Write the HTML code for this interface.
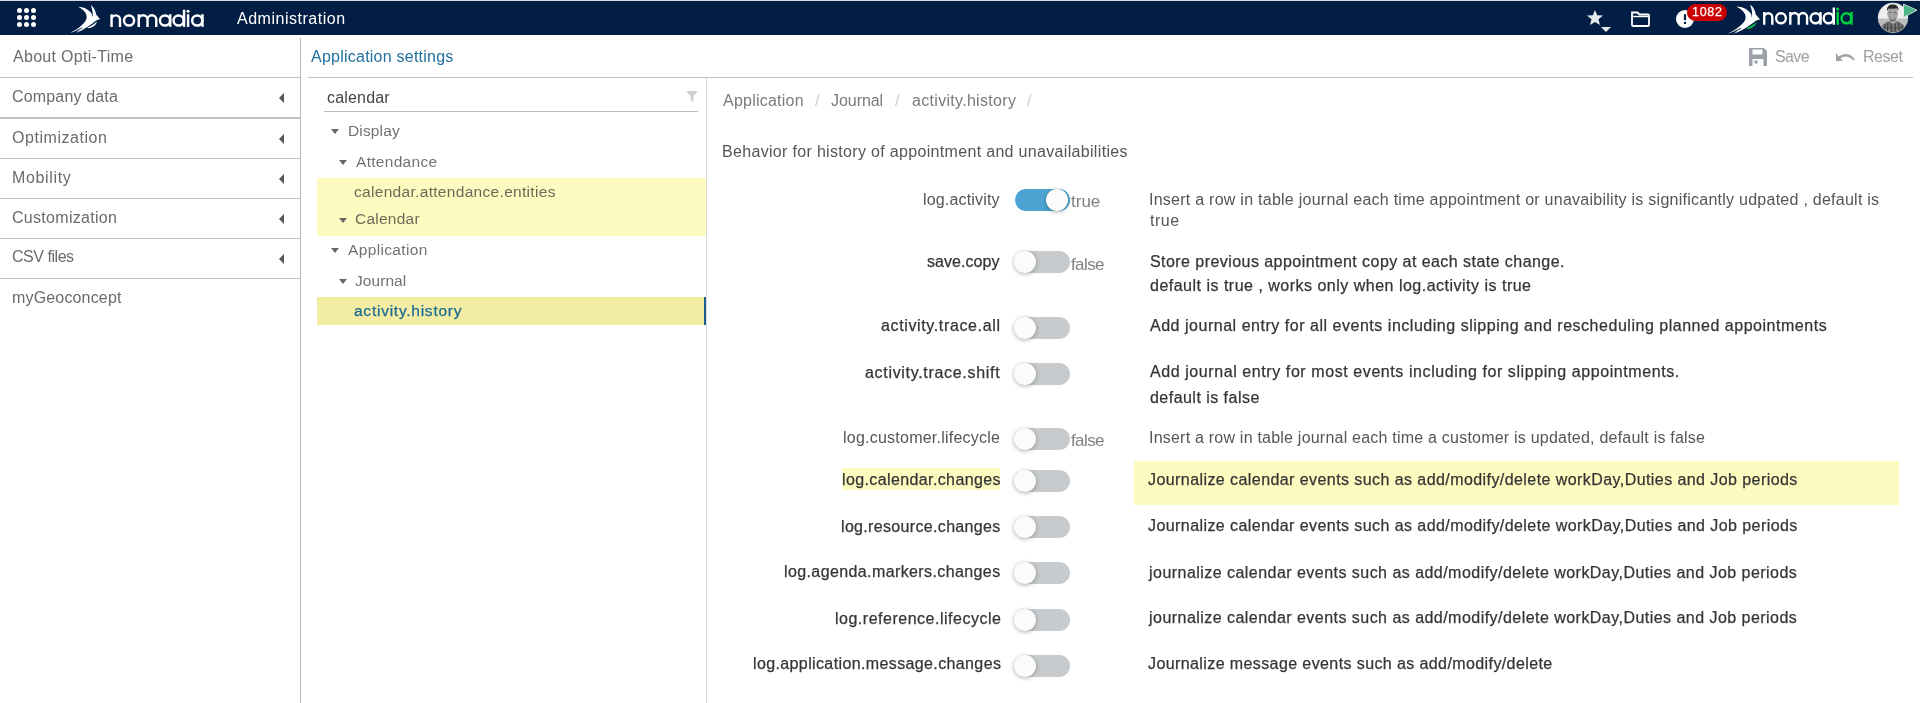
<!DOCTYPE html>
<html><head><meta charset="utf-8">
<style>
*{box-sizing:border-box;margin:0;padding:0}
html,body{width:1920px;height:703px;overflow:hidden;background:#fff;font-family:"Liberation Sans",sans-serif}
.a{position:absolute}
.t{position:absolute;white-space:nowrap;line-height:20px;will-change:transform}
.hdr{position:absolute;left:0;top:0;width:1920px;height:35px;background:#021e44;border-top:1px solid #d8dbe0}
.dot{position:absolute;width:5px;height:5px;border-radius:50%;background:#fff}
.hl{position:absolute;height:1px;background:#bcc2c6}
.vl{position:absolute;width:1px}
.arr{position:absolute;left:279px;width:0;height:0;border-top:5px solid transparent;border-bottom:5px solid transparent;border-right:5.5px solid #555}
.tri{position:absolute;width:0;height:0;border-left:4.5px solid transparent;border-right:4.5px solid transparent;border-top:5px solid #666}
.tg{position:absolute;left:1015px;width:55px;height:22px;border-radius:11px;background:#c8cbcd}
.tg.on{background:#4da4d2}
.kn{position:absolute;top:0;width:22px;height:22px;border-radius:50%;background:#fbfbfb;box-shadow:0 1px 4px rgba(0,0,0,.33)}
</style></head><body>

<div class="hdr"></div>
<div class="dot" style="left:17px;top:8px"></div><div class="dot" style="left:24px;top:8px"></div><div class="dot" style="left:31px;top:8px"></div>
<div class="dot" style="left:17px;top:15px"></div><div class="dot" style="left:24px;top:15px"></div><div class="dot" style="left:31px;top:15px"></div>
<div class="dot" style="left:17px;top:22px"></div><div class="dot" style="left:24px;top:22px"></div><div class="dot" style="left:31px;top:22px"></div>

<svg class="a" style="left:64px;top:0px" width="40" height="36" viewBox="0 0 40 36">
 <g transform="translate(3.5 0.6) scale(0.93 0.96)">
 <path d="M11.3 6.4 C17 6.5 22.5 9 25.5 13 C28 17 26.5 22 22 25.5 C16 30 8 32.5 3.1 33.5 C9 30.5 14.5 27 18 23 C21.5 19.5 23.5 12.5 11.3 6.4 Z" fill="#fff"/>
 <path d="M25.1 4.6 C28 6.5 30 10 30.8 14.5 L35.1 19.5 C33.5 19.8 31.8 20.3 30.5 21 C26 24.5 18 30.5 9.2 33.5 C14 29.5 19 26 22.5 22.5 C25.5 19.5 27.5 17 27.2 13.5 C27 10.5 26 7.5 25.1 4.6 Z" fill="#fff"/>
 <path d="M6 33.2 L16 28.3" stroke="#021e44" stroke-width="0.9"/>
 <path d="M21.8 27.9 C25.5 26.6 29 24.6 31.6 21.9 C31 25.4 27.5 28.3 21.8 28.9 Z" fill="#fff"/>
 </g>
</svg>

<svg class="a" style="left:1586px;top:9px" width="27" height="25" viewBox="0 0 27 25">
 <path d="M9 1 L11.2 6.3 L17 6.6 L12.5 10.3 L14 16 L9 12.9 L4 16 L5.5 10.3 L1 6.6 L6.8 6.3 Z" fill="#e6e8ec"/>
 <path d="M15 18 L25 18 L20 23 Z" fill="#e6e8ec"/>
</svg>
<svg class="a" style="left:1630px;top:10px" width="21" height="18" viewBox="0 0 21 18">
 <path d="M2 2.5 L7.5 2.5 L9.5 4.5 L18 4.5 Q19 4.5 19 5.5 L19 15 Q19 16 18 16 L3 16 Q2 16 2 15 Z" fill="none" stroke="#fff" stroke-width="1.8"/>
 <path d="M2 6.5 L19 6.5" stroke="#fff" stroke-width="1.4"/>
</svg>
<svg class="a" style="left:1675px;top:9px" width="20" height="20" viewBox="0 0 20 20">
 <circle cx="10" cy="10" r="9" fill="#fff"/>
 <rect x="8.9" y="5.2" width="2.2" height="6" fill="#021e44"/>
 <rect x="8.9" y="12.9" width="2.2" height="2.1" fill="#021e44"/>
</svg>
<div class="a" style="left:1687px;top:4px;width:40px;height:17px;border-radius:9px;background:#cc0000"></div>

<svg class="a" style="left:1725px;top:0px" width="40" height="36" viewBox="0 0 40 36">
 <path d="M11.3 6.4 C17 6.5 22.5 9 25.5 13 C28 17 26.5 22 22 25.5 C16 30 8 32.5 3.1 33.5 C9 30.5 14.5 27 18 23 C21.5 19.5 23.5 12.5 11.3 6.4 Z" fill="#fff"/>
 <path d="M25.1 4.6 C28 6.5 30 10 30.8 14.5 L35.1 19.5 C33.5 19.8 31.8 20.3 30.5 21 C26 24.5 18 30.5 9.2 33.5 C14 29.5 19 26 22.5 22.5 C25.5 19.5 27.5 17 27.2 13.5 C27 10.5 26 7.5 25.1 4.6 Z" fill="#fff"/>
 <path d="M6 33.2 L16 28.3" stroke="#021e44" stroke-width="0.9"/>
 <path d="M21.8 27.9 C25.5 26.6 29 24.6 31.6 21.9 C31 25.4 27.5 28.3 21.8 28.9 Z" fill="#00d43c"/>
</svg>
<svg class="a" style="left:1876px;top:1px" width="36" height="36" viewBox="0 0 36 36">
 <defs><clipPath id="avc"><circle cx="17" cy="16.8" r="14.9"/></clipPath></defs>
 <g clip-path="url(#avc)">
  <rect x="0" y="0" width="36" height="36" fill="#bdbdbd"/>
  <rect x="0" y="0" width="36" height="17.5" fill="#efefef"/>
  <ellipse cx="16.6" cy="12.6" rx="5.4" ry="6.6" fill="#a3a3a3"/>
  <path d="M11 10 C10.6 5 13.5 3.4 16.8 3.4 C20.2 3.4 22.8 5 22.4 10.2 L21 7.6 L12.6 7.8 Z" fill="#2a2a2a"/>
  <path d="M13.2 11.5 L15.2 11.5 M18.2 11.5 L20.2 11.5" stroke="#555" stroke-width="1"/>
  <path d="M13 16 C14 20 19.5 20 20.5 16 C20 22 13.5 22 13 16 Z" fill="#5a5a5a"/>
  <path d="M2.5 36 C3 25.5 8 21 14 20 L17 23 L20 20 C26 21 30.5 25.5 31.5 36 Z" fill="#7a7a7a"/>
  <path d="M9 23 L8 34 M12 21.5 L11 34 M15 22.5 L15.5 34 M19 22.5 L19.5 34 M22.5 21.5 L24 34 M26 23.5 L27 34" stroke="#3a3a3a" stroke-width="1.1"/>
  <path d="M6 27 L29 27 M5 31 L30 31" stroke="#4a4a4a" stroke-width="0.9"/>
 </g>
 <circle cx="17" cy="16.8" r="14.9" fill="none" stroke="#cfcfcf" stroke-width="0.6"/>
</svg>
<svg class="a" style="left:1902px;top:3px" width="18" height="16" viewBox="0 0 18 16">
 <path d="M1.5 1.1 L15 7.2 L1.5 14.4 Z" fill="#4db587" stroke="#e8f5ee" stroke-width="0.8" stroke-linejoin="round"/>
</svg>

<div class="vl" style="left:300px;top:38px;height:665px;background:#b4b9bc"></div>
<div class="hl" style="left:0;top:77px;width:300px"></div>
<div class="arr" style="top:93px"></div>
<div class="hl" style="left:0;top:117px;width:300px;height:2px"></div>
<div class="arr" style="top:134px"></div>
<div class="hl" style="left:0;top:158px;width:300px"></div>
<div class="arr" style="top:174px"></div>
<div class="hl" style="left:0;top:198px;width:300px"></div>
<div class="arr" style="top:214px"></div>
<div class="hl" style="left:0;top:238px;width:300px"></div>
<div class="arr" style="top:254px"></div>
<div class="hl" style="left:0;top:278px;width:300px"></div>

<div class="hl" style="left:308px;top:77px;width:1605px"></div>
<svg class="a" style="left:1748px;top:47px" width="20" height="20" viewBox="0 0 20 20">
 <path d="M1.5 1 L16 1 L19 4 L19 18.5 Q19 19 18.5 19 L1.5 19 Q1 19 1 18.5 L1 1.5 Q1 1 1.5 1 Z M4.5 2.5 L4.5 7.5 L14.5 7.5 L14.5 2.5 Z M4.5 12 L4.5 19 L15.5 19 L15.5 12 Z" fill="#9ba1a6" fill-rule="evenodd"/>
 <rect x="6.5" y="13.5" width="3" height="3" fill="#9ba1a6"/>
</svg>
<svg class="a" style="left:1835px;top:51px" width="21" height="12" viewBox="0 0 21 12">
 <path d="M1 2 L1 10 L8 10 L5.3 7.3 C9 4.5 14 4.5 18.5 9.5 L20 8.5 C15 2 9 1.5 3.8 5.8 Z" fill="#9ba1a6"/>
</svg>

<div class="vl" style="left:706px;top:78px;height:625px;background:#dadada"></div>
<div class="hl" style="left:324px;top:111px;width:374px;background:#b8bec2"></div>
<svg class="a" style="left:685px;top:90px" width="14" height="14" viewBox="0 0 14 14">
 <path d="M1 1 L13 1 L8.5 6 L8.5 12.5 L5.5 10 L5.5 6 Z" fill="#cfcfcf"/>
</svg>

<div class="a" style="left:317px;top:178px;width:389px;height:58px;background:#fefbc0"></div>
<div class="a" style="left:317px;top:297px;width:387px;height:28px;background:#f3eda4"></div>
<div class="a" style="left:704px;top:297px;width:2px;height:28px;background:#1d5f8e"></div>

<div class="tri" style="left:331px;top:129px"></div>
<div class="tri" style="left:339px;top:160px"></div>
<div class="tri" style="left:339px;top:218px"></div>
<div class="tri" style="left:331px;top:248px"></div>
<div class="tri" style="left:339px;top:279px"></div>

<div class="a" style="left:842px;top:468px;width:158px;height:22px;background:#fefbc0"></div>
<div class="a" style="left:1134px;top:461px;width:765px;height:44px;background:#fefbc0"></div>

<div class="tg on" style="top:189px"><div class="kn" style="left:31px"></div></div>
<div class="tg" style="top:251px"><div class="kn" style="left:-1px"></div></div>
<div class="tg" style="top:317px"><div class="kn" style="left:-1px"></div></div>
<div class="tg" style="top:363px"><div class="kn" style="left:-1px"></div></div>
<div class="tg" style="top:428px"><div class="kn" style="left:-1px"></div></div>
<div class="tg" style="top:470px"><div class="kn" style="left:-1px"></div></div>
<div class="tg" style="top:516px"><div class="kn" style="left:-1px"></div></div>
<div class="tg" style="top:562px"><div class="kn" style="left:-1px"></div></div>
<div class="tg" style="top:609px"><div class="kn" style="left:-1px"></div></div>
<div class="tg" style="top:655px"><div class="kn" style="left:-1px"></div></div>

<!--BC-SLASHES-->
<div class="t" style="left:815px;top:91px;color:#cfcfcf;font-size:16px">/</div>
<div class="t" style="left:895px;top:91px;color:#cfcfcf;font-size:16px">/</div>
<div class="t" style="left:1027px;top:91px;color:#cfcfcf;font-size:16px">/</div>

<svg class="a" style="left:100px;top:0" width="110" height="35" viewBox="100 0 110 35">
 <g fill="none" stroke="#fff" stroke-width="2.45">
  <path d="M111.55 26.9 V14.2 M111.55 19.6 A4.225 4.225 0 0 1 120 19.6 V26.9"/>
  <circle cx="129.05" cy="20.45" r="5.05"/>
  <path d="M138.75 26.9 V14.2 M138.75 19.6 A4.375 4.375 0 0 1 147.5 19.6 V26.9 M147.5 19.6 A4.375 4.375 0 0 1 156.25 19.6 V26.9"/>
  <circle cx="165" cy="20.45" r="5.05"/><path d="M170.25 14.2 V26.9"/>
  <circle cx="178.6" cy="20.45" r="5.05"/><path d="M184.05 9.7 V26.9"/>
  <path d="M188.1 14.2 V26.9"/>
  <circle cx="197.2" cy="20.45" r="5.05"/><path d="M202.5 14.2 V26.9"/>
 </g>
 <circle cx="188.1" cy="11.3" r="1.55" fill="#fff"/>
</svg>
<svg class="a" style="left:1750px;top:0" width="110" height="35" viewBox="1750 0 110 35">
 <g transform="translate(1657.112 -2.2) scale(0.96 1)">
 <g fill="none" stroke="#fff" stroke-width="2.45">
  <path d="M111.55 26.9 V14.2 M111.55 19.6 A4.225 4.225 0 0 1 120 19.6 V26.9"/>
  <circle cx="129.05" cy="20.45" r="5.05"/>
  <path d="M138.75 26.9 V14.2 M138.75 19.6 A4.375 4.375 0 0 1 147.5 19.6 V26.9 M147.5 19.6 A4.375 4.375 0 0 1 156.25 19.6 V26.9"/>
  <circle cx="165" cy="20.45" r="5.05"/><path d="M170.25 14.2 V26.9"/>
  <circle cx="178.6" cy="20.45" r="5.05"/><path d="M184.05 9.7 V26.9"/>
 </g>
 <g fill="none" stroke="#00d43c" stroke-width="2.45">
  <path d="M188.1 14.2 V26.9"/>
  <circle cx="197.2" cy="20.45" r="5.05"/><path d="M202.5 14.2 V26.9"/>
 </g>
 <circle cx="188.1" cy="11.3" r="1.55" fill="#00d43c"/>
 </g>
</svg>
<div class="t" style="left:237.3px;top:9px;font-size:16px;letter-spacing:0.515px;color:#ffffff;">Administration</div>
<div class="t" style="left:1691.5px;top:2px;font-size:12.5px;letter-spacing:0.733px;color:#ffffff;-webkit-text-stroke:0.25px #ffffff;">1082</div>
<div class="t" style="left:12.8px;top:47px;font-size:16px;letter-spacing:0.3px;color:#6b6b6b;">About Opti-Time</div>
<div class="t" style="left:12.1px;top:87px;font-size:16px;letter-spacing:0.164px;color:#6b6b6b;">Company data</div>
<div class="t" style="left:12.0px;top:128px;font-size:16px;letter-spacing:0.545px;color:#6b6b6b;">Optimization</div>
<div class="t" style="left:12.0px;top:168px;font-size:16px;letter-spacing:0.657px;color:#6b6b6b;">Mobility</div>
<div class="t" style="left:12.0px;top:208px;font-size:16px;letter-spacing:0.292px;color:#6b6b6b;">Customization</div>
<div class="t" style="left:12.0px;top:247px;font-size:16px;letter-spacing:-0.463px;color:#6b6b6b;">CSV files</div>
<div class="t" style="left:12.0px;top:288px;font-size:16px;letter-spacing:0.164px;color:#6b6b6b;">myGeoconcept</div>
<div class="t" style="left:311.0px;top:47px;font-size:16px;letter-spacing:0.237px;color:#21709f;">Application settings</div>
<div class="t" style="left:1774.8px;top:47px;font-size:16px;letter-spacing:-0.633px;color:#9ba0a4;">Save</div>
<div class="t" style="left:1862.5px;top:47px;font-size:16px;letter-spacing:-0.45px;color:#9ba0a4;">Reset</div>
<div class="t" style="left:326.7px;top:88px;font-size:16px;letter-spacing:0.186px;color:#444444;">calendar</div>
<div class="t" style="left:347.5px;top:121px;font-size:15.5px;letter-spacing:0.15px;color:#727272;">Display</div>
<div class="t" style="left:355.7px;top:152px;font-size:15.5px;letter-spacing:0.3px;color:#727272;">Attendance</div>
<div class="t" style="left:354.0px;top:182px;font-size:15.5px;letter-spacing:0.311px;color:#6b6a58;">calendar.attendance.entities</div>
<div class="t" style="left:354.7px;top:209px;font-size:15.5px;letter-spacing:0.243px;color:#6b6a58;">Calendar</div>
<div class="t" style="left:348.3px;top:240px;font-size:15.5px;letter-spacing:0.35px;color:#727272;">Application</div>
<div class="t" style="left:355.0px;top:271px;font-size:15.5px;letter-spacing:0.067px;color:#727272;">Journal</div>
<div class="t" style="left:353.8px;top:301px;font-size:15.5px;letter-spacing:0.753px;color:#1b6a93;-webkit-text-stroke:0.25px #1b6a93;">activity.history</div>
<div class="t" style="left:722.7px;top:91px;font-size:16px;letter-spacing:0.23px;color:#7a7a7a;">Application</div>
<div class="t" style="left:831.0px;top:91px;font-size:16px;letter-spacing:-0.05px;color:#7a7a7a;">Journal</div>
<div class="t" style="left:911.9px;top:91px;font-size:16px;letter-spacing:0.307px;color:#7a7a7a;">activity.history</div>
<div class="t" style="left:722.3px;top:142px;font-size:16px;letter-spacing:0.322px;color:#555555;">Behavior for history of appointment and unavailabilities</div>
<div class="t" style="left:922.9px;top:190px;font-size:16px;letter-spacing:0.173px;color:#555555;">log.activity</div>
<div class="t" style="left:927.3px;top:252px;font-size:16px;letter-spacing:0.062px;color:#353535;-webkit-text-stroke:0.25px #353535;">save.copy</div>
<div class="t" style="left:881.0px;top:316px;font-size:16px;letter-spacing:0.635px;color:#353535;-webkit-text-stroke:0.25px #353535;">activity.trace.all</div>
<div class="t" style="left:864.7px;top:363px;font-size:16px;letter-spacing:0.689px;color:#353535;-webkit-text-stroke:0.25px #353535;">activity.trace.shift</div>
<div class="t" style="left:842.9px;top:428px;font-size:16px;letter-spacing:0.233px;color:#555555;">log.customer.lifecycle</div>
<div class="t" style="left:841.5px;top:470px;font-size:16px;letter-spacing:0.384px;color:#353535;-webkit-text-stroke:0.25px #353535;">log.calendar.changes</div>
<div class="t" style="left:840.5px;top:517px;font-size:16px;letter-spacing:0.332px;color:#353535;-webkit-text-stroke:0.25px #353535;">log.resource.changes</div>
<div class="t" style="left:784.0px;top:562px;font-size:16px;letter-spacing:0.392px;color:#353535;-webkit-text-stroke:0.25px #353535;">log.agenda.markers.changes</div>
<div class="t" style="left:834.7px;top:609px;font-size:16px;letter-spacing:0.505px;color:#353535;-webkit-text-stroke:0.25px #353535;">log.reference.lifecycle</div>
<div class="t" style="left:752.5px;top:654px;font-size:16px;letter-spacing:0.377px;color:#353535;-webkit-text-stroke:0.25px #353535;">log.application.message.changes</div>
<div class="t" style="left:1070.5px;top:192px;font-size:17px;letter-spacing:0.0px;color:#808080;">true</div>
<div class="t" style="left:1070.9px;top:255px;font-size:17px;letter-spacing:-0.6px;color:#808080;">false</div>
<div class="t" style="left:1070.9px;top:431px;font-size:17px;letter-spacing:-0.6px;color:#808080;">false</div>
<div class="t" style="left:1149.4px;top:190px;font-size:16px;letter-spacing:0.256px;color:#555555;">Insert a row in table journal each time appointment or unavaibility is significantly udpated , default is</div>
<div class="t" style="left:1150.4px;top:211px;font-size:16px;letter-spacing:0.533px;color:#555555;">true</div>
<div class="t" style="left:1150.0px;top:252px;font-size:16px;letter-spacing:0.444px;color:#353535;-webkit-text-stroke:0.25px #353535;">Store previous appointment copy at each state change.</div>
<div class="t" style="left:1150.0px;top:276px;font-size:16px;letter-spacing:0.494px;color:#353535;-webkit-text-stroke:0.25px #353535;">default is true , works only when log.activity is true</div>
<div class="t" style="left:1150.0px;top:316px;font-size:16px;letter-spacing:0.523px;color:#353535;-webkit-text-stroke:0.25px #353535;">Add journal entry for all events including slipping and rescheduling planned appointments</div>
<div class="t" style="left:1150.0px;top:362px;font-size:16px;letter-spacing:0.581px;color:#353535;-webkit-text-stroke:0.25px #353535;">Add journal entry for most events including for slipping appointments.</div>
<div class="t" style="left:1150.0px;top:388px;font-size:16px;letter-spacing:0.467px;color:#353535;-webkit-text-stroke:0.25px #353535;">default is false</div>
<div class="t" style="left:1149.0px;top:428px;font-size:16px;letter-spacing:0.218px;color:#555555;">Insert a row in table journal each time a customer is updated, default is false</div>
<div class="t" style="left:1148.0px;top:470px;font-size:16px;letter-spacing:0.427px;color:#353535;-webkit-text-stroke:0.25px #353535;">Journalize calendar events such as add/modify/delete workDay,Duties and Job periods</div>
<div class="t" style="left:1148.0px;top:516px;font-size:16px;letter-spacing:0.427px;color:#353535;-webkit-text-stroke:0.25px #353535;">Journalize calendar events such as add/modify/delete workDay,Duties and Job periods</div>
<div class="t" style="left:1149.0px;top:563px;font-size:16px;letter-spacing:0.463px;color:#353535;-webkit-text-stroke:0.25px #353535;">journalize calendar events such as add/modify/delete workDay,Duties and Job periods</div>
<div class="t" style="left:1149.0px;top:608px;font-size:16px;letter-spacing:0.463px;color:#353535;-webkit-text-stroke:0.25px #353535;">journalize calendar events such as add/modify/delete workDay,Duties and Job periods</div>
<div class="t" style="left:1148.0px;top:654px;font-size:16px;letter-spacing:0.4px;color:#353535;-webkit-text-stroke:0.25px #353535;">Journalize message events such as add/modify/delete</div>
</body></html>
